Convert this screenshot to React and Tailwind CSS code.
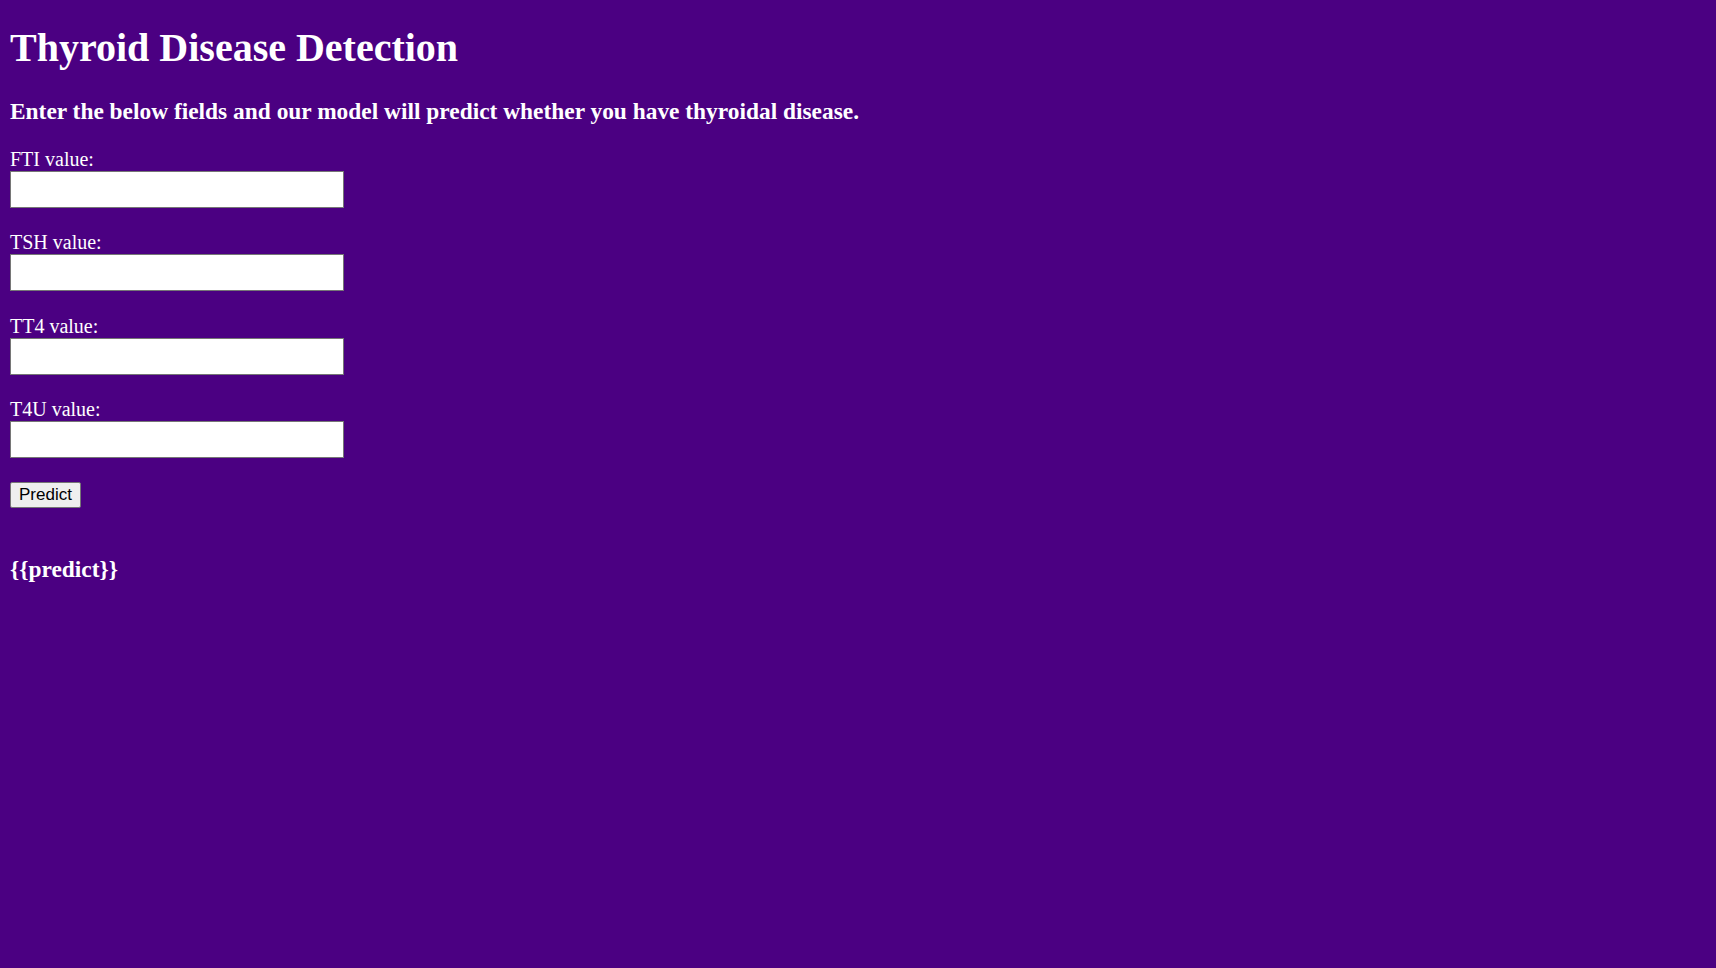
export default function App() {
  const fields = ["FTI value:", "TSH value:", "TT4 value:", "T4U value:"];
  return (
    <div
      className="min-h-screen w-full bg-[#4b0082] px-[10px] text-white"
      style={{ fontFamily: '"Liberation Serif", "Times New Roman", serif' }}
    >
      <div className="h-[25px]" />
      <h1 className="m-0 text-[40px] font-bold leading-[46px]">Thyroid Disease Detection</h1>
      <h3 className="mt-[26.5px] text-[23.4px] font-bold leading-[27px]">
        Enter the below fields and our model will predict whether you have thyroidal disease.
      </h3>
      <form className="mt-[23.4px]" onSubmit={(e) => e.preventDefault()}>
        {fields.map((f) => (
          <div key={f}>
            <label className="block text-[20px] leading-[23px]">{f}</label>
            <input
              type="text"
              className="block h-[37px] w-[334px] border border-[#767676] bg-white px-[2px] text-black outline-none"
            />
            <div className="h-[23.33px]" />
          </div>
        ))}
        <button
          type="submit"
          className="mt-[1px] block h-[26px] w-[71px] rounded-[2px] border border-[#767676] bg-[#efefef] text-[17px] leading-[20px] text-black"
          style={{ fontFamily: '"Liberation Sans", Arial, sans-serif' }}
        >
          Predict
        </button>
      </form>
      <div className="h-[24px]" />
      <h3 className="mt-[23.4px] text-[23.4px] font-bold leading-[27px]">{"{{predict}}"}</h3>
    </div>
  );
}
